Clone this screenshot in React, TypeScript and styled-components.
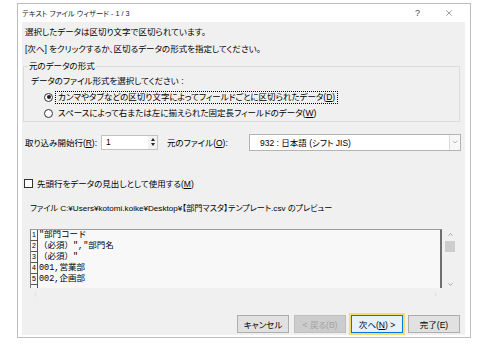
import React from "react";
import styled, { createGlobalStyle } from "styled-components";
import { X, ChevronDown, ChevronUp, ChevronLeft, ChevronRight } from "lucide-react";

const GlobalStyle = createGlobalStyle`
  body {
    margin: 0;
    background: #fff;
    font-family: "Liberation Sans", "Noto Sans CJK JP", sans-serif;
    font-feature-settings: "palt";
    font-size: 8.5px;
    color: #000;
  }
  u {
    text-underline-offset: 1px;
  }
`

const Page = styled.div`
  padding: 3px 0 0 17px;
`
const Dialog = styled.div`
  width: 454px;
  height: 335px;
  box-sizing: border-box;
  border: 1px solid #bdbdbd;
  background: #fff;
  display: flex;
  flex-direction: column;
`
const TitleBar = styled.div`
  height: 18px;
  display: flex;
  align-items: center;
  padding: 0 16px 0 4px;
`
const Title = styled.div`
  flex: 1;
  font-size: 7.3px;
  color: #222;
`
const Help = styled.span`
  font-size: 9px;
  color: #444;
  margin-right: 24px;
`
const Body = styled.div`
  flex: 1;
  margin: 0 5px 2px 4px;
  padding: 2px 4px 0 1px;
  background: #f0f0f0;
  display: flex;
  flex-direction: column;
`
const Line = styled.div`
  height: 17px;
  line-height: 17px;
  padding-left: 2px;
  white-space: nowrap;
`
const Group = styled.fieldset`
  margin: 0 1px 0 0;
  padding: 0;
  height: 64px;
  box-sizing: border-box;
  border: 1px solid #dcdcdc;
  min-width: 0;
`
const Legend = styled.legend`
  margin-left: 4px;
  padding: 0 1px;
  line-height: 16px;
`
const Prompt = styled.div`
  height: 15px;
  line-height: 15px;
  padding-left: 7px;
`
const RadioRow = styled.div`
  height: 16px;
  display: flex;
  align-items: center;
  padding-left: 20px;
`
const Radio = styled.span<{ $checked?: boolean }>`
  width: 9px;
  height: 9px;
  box-sizing: border-box;
  border-radius: 50%;
  border: 1px solid #333;
  background: #fff;
  display: inline-flex;
  align-items: center;
  justify-content: center;
  &::after {
    content: "";
    width: 4px;
    height: 4px;
    border-radius: 50%;
    background: ${(p) => (p.$checked ? "#222" : "transparent")};
  }
`
const RadioLabel = styled.span<{ $focused?: boolean }>`
  margin-left: 2px;
  padding: 0 2px;
  line-height: 11px;
  border: 1px dotted ${(p) => (p.$focused ? "#000" : "transparent")};
`
const FieldRow = styled.div`
  margin-top: 10px;
  height: 20px;
  display: flex;
  align-items: center;
`
const FieldLabel = styled.span<{ $width: number }>`
  width: ${(p) => p.$width}px;
  flex: none;
  padding-left: 2px;
  box-sizing: border-box;
  white-space: nowrap;
`
const Spin = styled.div`
  width: 57px;
  height: 15px;
  box-sizing: border-box;
  border: 1px solid #c2c2c2;
  background: #fff;
  display: flex;
  align-items: center;
  margin-right: 7px;
`
const SpinValue = styled.span`
  flex: 1;
  padding-left: 4px;
`
const SpinButtons = styled.div`
  width: 9px;
  height: 100%;
  background: #f2f2f2;
  display: flex;
  flex-direction: column;
  align-items: center;
  justify-content: space-evenly;
`
const Tri = styled.span<{ $up?: boolean }>`
  width: 0;
  height: 0;
  border-left: 2.5px solid transparent;
  border-right: 2.5px solid transparent;
  ${(p) => (p.$up ? "border-bottom: 3px solid #222;" : "border-top: 3px solid #222;")}
`
const Select = styled.div`
  flex: 1;
  height: 17px;
  box-sizing: border-box;
  border: 1px solid #b4b4b4;
  background: #fff;
  display: flex;
  align-items: center;
`
const SelectValue = styled.span`
  flex: 1;
  padding-left: 10px;
`
const DropButton = styled.span`
  width: 11px;
  height: 100%;
  box-sizing: border-box;
  border-left: 1px solid #dadada;
  background: #f7f7f7;
  display: flex;
  align-items: center;
  justify-content: center;
  color: #777;
`
const CheckRow = styled.div`
  margin-top: 23px;
  height: 16px;
  display: flex;
  align-items: center;
  padding-left: 1px;
`
const Check = styled.span`
  width: 9px;
  height: 9px;
  box-sizing: border-box;
  border: 1px solid #333;
  background: #fff;
  margin-right: 4px;
`
const PreviewCaption = styled.div`
  margin-top: 10px;
  height: 16px;
  line-height: 16px;
  padding-left: 7px;
  font-size: 8.1px;
  white-space: nowrap;
`
const Preview = styled.div`
  margin: 12px 0 0 7px;
  width: 428px;
  display: grid;
  grid-template-columns: 1fr 16px;
  grid-template-rows: 59px 13px;
`
const TextArea = styled.div`
  border-top: 1px solid #9c9c9c;
  border-left: 1px solid #7c7c7c;
  border-right: 2px solid #6f6f6f;
  background: #f8f8f8;
  display: flex;
  overflow: hidden;
`
const NumColumn = styled.div`
  width: 6px;
  border-right: 1px solid #555;
  display: flex;
  flex-direction: column;
`
const Num = styled.div`
  height: 10px;
  line-height: 10px;
  border-bottom: 1px solid #555;
  font-size: 7px;
  text-align: center;
`
const Rows = styled.div`
  flex: 1;
  padding-left: 1px;
  font-family: "Liberation Mono", "Noto Sans CJK JP", monospace;
  font-feature-settings: normal;
`
const Row = styled.div`
  height: 11px;
  line-height: 11px;
  font-size: 8.5px;
  white-space: pre;
`
const VScroll = styled.div`
  display: flex;
  flex-direction: column;
  align-items: center;
  padding-top: 2px;
  color: #444;
`
const Thumb = styled.div`
  width: 10px;
  height: 11px;
  background: #cdcdcd;
  margin: 3px 0 auto;
`
const HScroll = styled.div`
  display: flex;
  align-items: center;
  justify-content: space-between;
  padding: 0 3px 0 2px;
  color: #bdbdbd;
`
const Buttons = styled.div`
  margin-top: 14px;
  display: flex;
  justify-content: flex-end;
  gap: 5px;
  padding-right: 1px;
`
const Button = styled.button<{ $variant?: "default" | "disabled" }>`
  width: 52px;
  height: 18px;
  padding: 0;
  box-sizing: border-box;
  font-family: inherit;
  font-feature-settings: "palt";
  font-size: 8.5px;
  border: 1px solid ${(p) => (p.$variant === "default" ? "#0078d7" : p.$variant === "disabled" ? "#bfbfbf" : "#adadad")};
  background: ${(p) => (p.$variant === "default" ? "#e5f1fb" : p.$variant === "disabled" ? "#cccccc" : "#e1e1e1")};
  color: ${(p) => (p.$variant === "disabled" ? "#a3a3a3" : "#000")};
  ${(p) => p.$variant === "default" && "box-shadow: 0 0 0 2px #f8dc72;"}
`

const previewLines = [
  "\"部門コード",
  "（必須）\",\"部門名",
  "（必須）\"",
  "001,営業部",
  "002,企画部",
]

const App = () => {
  return (
    <Page>
      <GlobalStyle />
      <Dialog>
        <TitleBar>
          <Title>テキスト ファイル ウィザード - 1 / 3</Title>
          <Help>?</Help>
          <X size={10} strokeWidth={1.2} color="#444" />
        </TitleBar>
        <Body>
          <Line>選択したデータは区切り文字で区切られています。</Line>
          <Line>[次へ] をクリックするか、区切るデータの形式を指定してください。</Line>
          <Group>
            <Legend>元のデータの形式</Legend>
            <Prompt>データのファイル形式を選択してください :</Prompt>
            <RadioRow>
              <Radio $checked />
              <RadioLabel $focused>
                カンマやタブなどの区切り文字によってフィールドごとに区切られたデータ(<u>D</u>)
              </RadioLabel>
            </RadioRow>
            <RadioRow>
              <Radio />
              <RadioLabel>
                スペースによって右または左に揃えられた固定長フィールドのデータ(<u>W</u>)
              </RadioLabel>
            </RadioRow>
          </Group>
          <FieldRow>
            <FieldLabel $width={78}>取り込み開始行(<u>R</u>):</FieldLabel>
            <Spin>
              <SpinValue>1</SpinValue>
              <SpinButtons>
                <Tri $up />
                <Tri />
              </SpinButtons>
            </Spin>
            <FieldLabel $width={84}>元のファイル(<u>O</u>):</FieldLabel>
            <Select>
              <SelectValue>932 : 日本語 (シフト JIS)</SelectValue>
              <DropButton>
                <ChevronDown size={8} strokeWidth={1.5} />
              </DropButton>
            </Select>
          </FieldRow>
          <CheckRow>
            <Check />
            <span>先頭行をデータの見出しとして使用する(<u>M</u>)</span>
          </CheckRow>
          <PreviewCaption>
            ファイル C:¥Users¥kotomi.koike¥Desktop¥【部門マスタ】テンプレート.csv のプレビュー
          </PreviewCaption>
          <Preview>
            <TextArea>
              <NumColumn>
                {previewLines.map((_, i) => (
                  <Num key={i}>{i + 1}</Num>
                ))}
              </NumColumn>
              <Rows>
                {previewLines.map((line, i) => (
                  <Row key={i}>{line}</Row>
                ))}
              </Rows>
            </TextArea>
            <VScroll>
              <ChevronUp size={7} strokeWidth={1.5} />
              <Thumb />
              <ChevronDown size={7} strokeWidth={1.5} />
            </VScroll>
            <HScroll>
              <ChevronLeft size={7} strokeWidth={1.5} />
              <ChevronRight size={7} strokeWidth={1.5} />
            </HScroll>
          </Preview>
          <Buttons>
            <Button>キャンセル</Button>
            <Button $variant="disabled">&lt; 戻る(B)</Button>
            <Button $variant="default">次へ(<u>N</u>) &gt;</Button>
            <Button>完了(E)</Button>
          </Buttons>
        </Body>
      </Dialog>
    </Page>
  )
}

export default App
